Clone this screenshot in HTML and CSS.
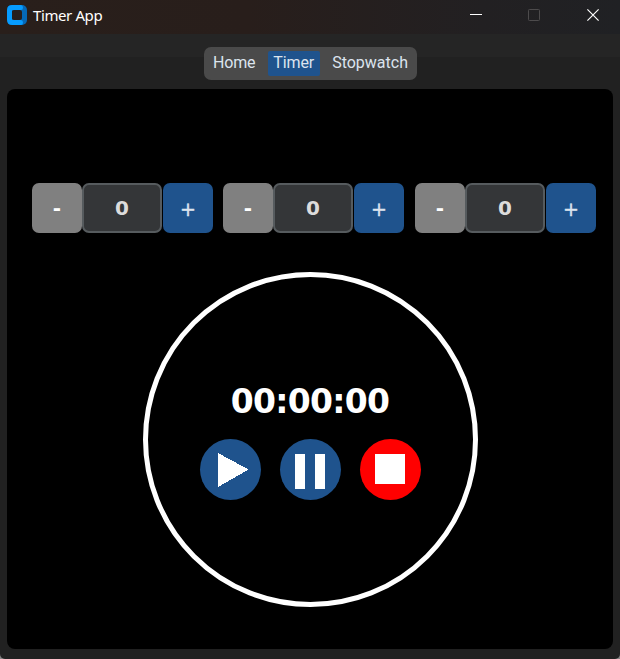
FILE: index.html
```html
<!DOCTYPE html>
<html lang="en">
<head>
<meta charset="utf-8">
<title>Timer App</title>
<link rel="stylesheet" href="styles.css">
</head>
<body>
<div class="window">
  <header class="titlebar">
    <svg class="logo" width="20" height="20" viewBox="0 0 20 20">
      <rect x="6" width="14" height="20" rx="5" fill="#0569b8"/>
      <path fill="#069cff" d="M5 0H14Q16 0 16 2.500Q16 5 14 5H7Q5 5 5 7V13Q5 15 7 15H14Q16 15 16 17.500Q16 20 14 20H5Q0 20 0 15V5Q0 0 5 0Z"/>
      <rect x="5" y="5" width="10" height="10" rx="2" fill="#271f1d"/>
    </svg>
    <span class="title">Timer App</span>
    <div class="controls">
      <svg width="12" height="12" viewBox="0 0 12 12"><path d="M0 5.500H12" stroke="#fff"/></svg>
      <svg width="12" height="12" viewBox="0 0 12 12"><rect x=".5" y=".5" width="11" height="11" rx=".8" fill="none" stroke="#4d4b4c"/></svg>
      <svg class="close" width="12" height="12" viewBox="0 0 12 12"><path d="M.4 .4L11.600 11.600M11.600 .4L.4 11.600" stroke="#fff" stroke-width="1.15"/></svg>
    </div>
  </header>
  <nav class="navrow">
    <div class="tabs">
      <button class="tab home">Home</button>
      <button class="tab active">Timer</button>
      <button class="tab stopwatch">Stopwatch</button>
    </div>
  </nav>
  <main class="panel">
    <div class="steppers">
      <div class="stepper"><button class="step minus">-</button><div class="value">0</div><button class="step plus">+</button></div>
      <div class="stepper"><button class="step minus">-</button><div class="value">0</div><button class="step plus">+</button></div>
      <div class="stepper last"><button class="step minus">-</button><div class="value">0</div><button class="step plus">+</button></div>
    </div>
    <section class="dial">
      <div class="time">00:00:00</div>
      <div class="actions">
        <button class="action"><svg width="61" height="61" shape-rendering="crispEdges"><path d="M18 14L48.500 30.500L18 48Z" fill="#fff"/></svg></button>
        <button class="action"><svg width="61" height="61"><path d="M15 15h10v35H15zM35 15h10v35H35z" fill="#fff"/></svg></button>
        <button class="action stop"><svg width="61" height="61"><path d="M15 15h30v30H15z" fill="#fff"/></svg></button>
      </div>
    </section>
  </main>
</div>
</body>
</html>
```
FILE: styles.css
```css
* { box-sizing: border-box; }
body { margin: 0; background: #858585; }
button { border: 0; padding: 0; margin: 0; }
svg { display: block; }
.window {
  width: 620px; height: 659px; overflow: hidden;
  border-radius: 0 0 5px 5px;
  background: #212121;
  display: flex; flex-direction: column;
}
.titlebar {
  height: 34px; flex: none; padding: 0 21px 4px 7px;
  display: flex; align-items: center;
  background: linear-gradient(90deg, #291f1b 0%, #281e1b 40%, #222022 78%, #202124 100%);
}
.title { margin-left: 6px; font: 15px/20px "Noto Sans", sans-serif; color: #fff; letter-spacing: -0.4px; }
.controls { display: flex; gap: 46px; margin-left: auto; }
.close { margin-left: 1px; }
.navrow {
  height: 55px; flex: none; padding-top: 13px;
  display: flex; justify-content: center; align-items: flex-start;
  background: linear-gradient(#252525 23px, #212121 23px);
}
.tabs {
  width: 213px; height: 33px; padding: 4px 9px; margin-left: 1px;
  display: flex; align-items: center; justify-content: space-between;
  background: #4a4a4a; border-radius: 7px;
}
.tab { height: 25px; background: none; font: 16px/23px Roboto, sans-serif; color: #dce4ee; padding-bottom: 2px; }
.tab.home { letter-spacing: -0.2px; }
.tab.active { width: 52px; background: #1f538d; border-radius: 2px; letter-spacing: -0.1px; }
.panel {
  width: 606px; height: 560px; margin-left: 7px; padding-top: 94px;
  background: #000; border-radius: 8px;
  display: flex; flex-direction: column; align-items: center;
}
.steppers { display: flex; gap: 10px; align-self: flex-start; margin-left: 25px; }
.stepper { display: flex; width: 181px; height: 50px; }
.stepper.last { margin-left: 1px; }
.step, .value {
  display: flex; align-items: center; justify-content: center;
  width: 50px; height: 50px; border-radius: 7px;
  font: bold 20px/20px "DejaVu Sans", sans-serif; color: #dce4ee;
}
.minus { background: #808080; color: #fff; }
.value { width: 80px; margin-right: 1px; background: #343638; border: 2px solid #565b5e; color: #dcdcdc; }
.plus { background: #1f538d; font-size: 19px; font-weight: normal; -webkit-text-stroke: 0.4px #dce4ee; padding-top: 1px; }
.dial {
  width: 335px; height: 335px; margin: 39px 0 0 1px; padding-top: 105px;
  border: 5px solid #fff; border-radius: 50%;
  display: flex; flex-direction: column; align-items: center;
}
.time { font: bold 33px/40px "DejaVu Sans", sans-serif; letter-spacing: -0.7px; color: #fff; margin-right: 1px; }
.actions { display: flex; gap: 19px; margin-top: 17px; }
.action { width: 61px; height: 61px; border-radius: 50%; background: #1f538d; }
.action.stop { background: #f00; }
```
